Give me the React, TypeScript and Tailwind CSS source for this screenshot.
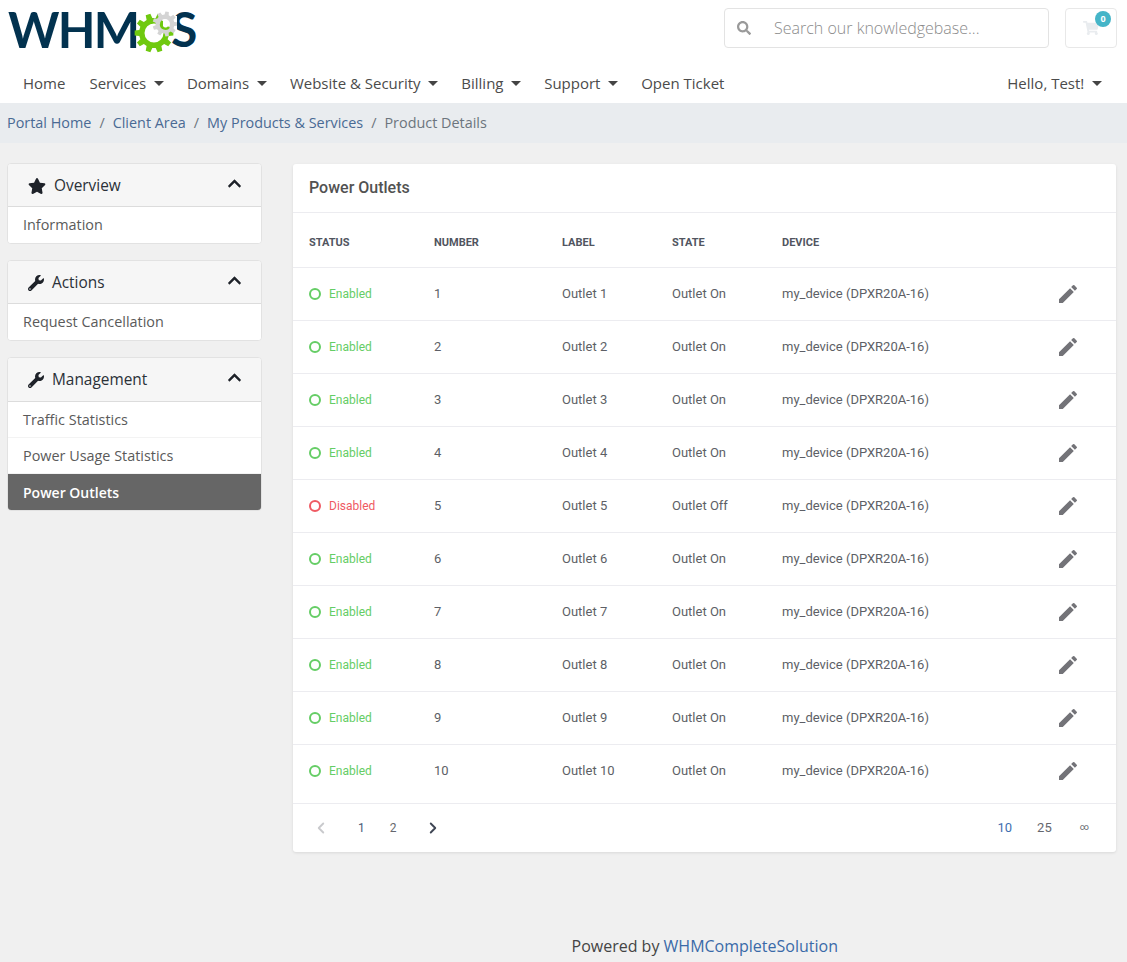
import React from "react";
import { FaStar, FaWrench, FaChevronUp, FaSearch, FaShoppingCart } from "react-icons/fa";
import { MdEdit } from "react-icons/md";
import { LuChevronLeft, LuChevronRight } from "react-icons/lu";

function gearPath(cx: number, cy: number, ro: number, ri: number, hole: number, teeth: number) {
  let d = "";
  const step = (Math.PI * 2) / teeth;
  for (let i = 0; i < teeth; i++) {
    const a = i * step;
    const pts: [number, number][] = [
      [ri, a - step * 0.32],
      [ro, a - step * 0.2],
      [ro, a + step * 0.2],
      [ri, a + step * 0.32],
    ];
    pts.forEach(([r, t], j) => {
      const x = cx + r * Math.cos(t);
      const y = cy + r * Math.sin(t);
      d += `${i === 0 && j === 0 ? "M" : "L"}${x.toFixed(2)} ${y.toFixed(2)} `;
    });
  }
  d += "Z ";
  d += `M${cx + hole} ${cy} A${hole} ${hole} 0 1 0 ${cx - hole} ${cy} A${hole} ${hole} 0 1 0 ${cx + hole} ${cy} Z`;
  return d;
}

function Logo() {
  return (
    <div className="relative w-[200px] h-[50px]">
      <span className="absolute left-0 top-0 text-[49px] leading-[50px] font-bold text-[#02324f] tracking-[-1.8px] font-['Lato',sans-serif]">WHM</span>
      <span className="absolute left-[163px] top-0 text-[48px] leading-[50px] font-bold text-[#02324f] font-['Lato',sans-serif]">S</span>
      <svg className="absolute left-[119px] top-0" width="50" height="50" viewBox="127 0 50 50">
        <path d={gearPath(154, 29, 19.5, 15, 9.5, 10)} fill="#6fc90f" fillRule="evenodd" />
        <rect x="163" y="12" width="14" height="14" fill="#ffffff" />
        <path d={gearPath(165, 20, 12.5, 9.5, 5, 9)} fill="#d4d4d4" fillRule="evenodd" />
        <path d="M161 20 A4.5 4.5 0 0 0 169 23" stroke="#6fc90f" strokeWidth="2.4" fill="none" />
      </svg>
    </div>
  );
}

function Caret() {
  return <span className="inline-block ml-[7.5px] mr-[-0.8px] align-[3px] w-0 h-0 border-x-[5px] border-x-transparent border-t-[5px] border-t-[#444]" />;
}

function NavItem({ label, caret }: { label: string; caret?: boolean }) {
  return (
    <span className="text-[#4b4b4b] whitespace-nowrap">
      {label}
      {caret && <Caret />}
    </span>
  );
}

function SideLink({ label, active, last }: { label: string; active?: boolean; last?: boolean }) {
  return (
    <div
      className={`h-[36px] pl-[15px] flex items-center ${
        active ? "bg-[#666666] text-white font-semibold text-[14px]" : "bg-white text-[#5a5a5a] text-[14.4px]"
      } ${last || active ? "" : "border-b border-[#f3f3f3]"}`}
    >
      {label}
    </div>
  );
}

function SideCard({ title, icon, links, tall }: { title: string; icon: React.ReactNode; links: { label: string; active?: boolean }[]; tall?: boolean }) {
  return (
    <section className="rounded-[4px] border border-[#e2e2e2] overflow-hidden bg-white">
      <header className={`${tall ? "h-[44px] pb-[1px]" : "h-[43px]"} pt-[1px] bg-[#f6f6f6] border-b border-[#dcdcdc] flex items-center pl-[20px] pr-[19px] text-[#2b3138]`}>
        {icon}
        <span className="text-[15.4px]">{title}</span>
        <FaChevronUp className="ml-auto mb-[5px] text-[15px] text-[#1e2229]" />
      </header>
      {links.map((l, i) => (
        <SideLink key={l.label} label={l.label} active={l.active} last={i === links.length - 1} />
      ))}
    </section>
  );
}

const rows = Array.from({ length: 10 }, (_, i) => ({
  n: i + 1,
  on: i !== 4,
}));

const cols = "grid grid-cols-[125px_128px_110px_110px_274px_1fr] items-center pl-[16px]";

export default function App() {
  return (
    <div className="min-h-[962px] bg-[#f0f0f0] font-['Open_Sans',sans-serif] overflow-hidden">
      <div className="bg-white h-[103px] flex flex-col">
        <div className="h-[66px] flex items-start pl-[8px] pr-[10px]">
          <div className="pt-[4px]">
            <Logo />
          </div>
          <div className="ml-auto mt-[8px] w-[325px] h-[40px] border border-[#e3e3e3] rounded-[4px] flex items-center pl-[12px]">
            <FaSearch className="text-[14px] text-[#9a9a9a]" />
            <span className="ml-[23px] text-[16px] font-light text-[#8b8b8b]">Search our knowledgebase...</span>
          </div>
          <div className="relative ml-[16px] mt-[8px] w-[52px] h-[40px] border border-[#e8e8e8] rounded-[4px] flex items-center justify-center">
            <FaShoppingCart className="text-[16px] text-[#e9ecef]" />
            <span className="absolute right-[5px] top-[2px] w-[16px] h-[16px] rounded-full bg-[#45b5c8] text-white text-[9px] font-bold flex items-center justify-center">0</span>
          </div>
        </div>
        <nav className="h-[37px] pb-[3px] flex items-center pl-[23px] pr-[26px] gap-[24px] text-[15px]">
          <NavItem label="Home" />
          <NavItem label="Services" caret />
          <NavItem label="Domains" caret />
          <NavItem label="Website & Security" caret />
          <NavItem label="Billing" caret />
          <NavItem label="Support" caret />
          <NavItem label="Open Ticket" />
          <span className="ml-auto">
            <NavItem label="Hello, Test!" caret />
          </span>
        </nav>
      </div>

      <div className="h-[40px] pb-[1px] bg-[#e9ecef] flex items-center pl-[7px] text-[14.4px] text-[#6c757d]">
        <a className="text-[#4a6a94]">Portal Home</a>
        <span className="mx-[8px]">/</span>
        <a className="text-[#4a6a94]">Client Area</a>
        <span className="mx-[8px]">/</span>
        <a className="text-[#4a6a94]">My Products & Services</a>
        <span className="mx-[8px]">/</span>
        <span>Product Details</span>
      </div>

      <div className="flex items-start pl-[7px] pr-[11px] pt-[20px]">
        <aside className="w-[255px] shrink-0 flex flex-col gap-[16px]">
          <SideCard title="Overview" icon={<FaStar className="mr-[8px] text-[18px] text-[#1e2229]" />} links={[{ label: "Information" }]} />
          <SideCard title="Actions" icon={<FaWrench className="mr-[8px] text-[16px] text-[#1e2229]" />} links={[{ label: "Request Cancellation" }]} />
          <SideCard
            tall
            title="Management"
            icon={<FaWrench className="mr-[8px] text-[16px] text-[#1e2229]" />}
            links={[{ label: "Traffic Statistics" }, { label: "Power Usage Statistics" }, { label: "Power Outlets", active: true }]}
          />
        </aside>

        <main className="ml-[31px] mt-[1px] flex-1 bg-white rounded-[3px] shadow-[0_1px_3px_rgba(0,0,0,0.1)] font-['Roboto',sans-serif]">
          <div className="h-[49px] pl-[16px] flex items-center text-[16px] font-medium text-[#525252] border-b border-[#ececf0]">Power Outlets</div>
          <div className={`${cols} h-[55px] pt-[6px] text-[11px] font-bold text-[#51555f] border-b border-[#ececf0]`}>
            <span>STATUS</span>
            <span>NUMBER</span>
            <span>LABEL</span>
            <span>STATE</span>
            <span>DEVICE</span>
            <span />
          </div>
          {rows.map((r) => (
            <div key={r.n} className={`${cols} ${r.n === 10 ? "h-[59px] pb-[6px]" : "h-[53px]"} text-[13px] text-[#5d5f66] border-b border-[#ececf0]`}>
              <span className={`flex items-center text-[12px] ${r.on ? "text-[#65cd65]" : "text-[#ef5a63]"}`}>
                <span className={`w-[12px] h-[12px] rounded-full border-2 ${r.on ? "border-[#65cd65]" : "border-[#ef5a63]"}`} />
                <span className="ml-[8px]">{r.on ? "Enabled" : "Disabled"}</span>
              </span>
              <span>{r.n}</span>
              <span>{`Outlet ${r.n}`}</span>
              <span>{r.on ? "Outlet On" : "Outlet Off"}</span>
              <span>my_device (DPXR20A-16)</span>
              <MdEdit className="text-[24px] text-[#737378]" />
            </div>
          ))}
          <div className="h-[48px] flex items-center pl-[19px] pr-[27px] text-[13px] text-[#65676e]">
            <LuChevronLeft className="text-[18px] text-[#c9cacd]" strokeWidth={2.5} />
            <span className="ml-[28px] text-[12px] text-[#4a5a78]">1</span>
            <span className="ml-[25px] text-[12px]">2</span>
            <LuChevronRight className="ml-[27px] text-[18px] text-[#3f4654]" strokeWidth={2.5} />
            <span className="ml-auto text-[#3f6fb0]">10</span>
            <span className="ml-[25px]">25</span>
            <span className="ml-[28px] text-[9px]">∞</span>
          </div>
        </main>
      </div>

      <div className="mt-[82px] h-[30px] pl-[571.5px] text-[16px] text-[#444]">
        Powered by <span className="text-[#3a6aa8]">WHMCompleteSolution</span>
      </div>
    </div>
  );
}
